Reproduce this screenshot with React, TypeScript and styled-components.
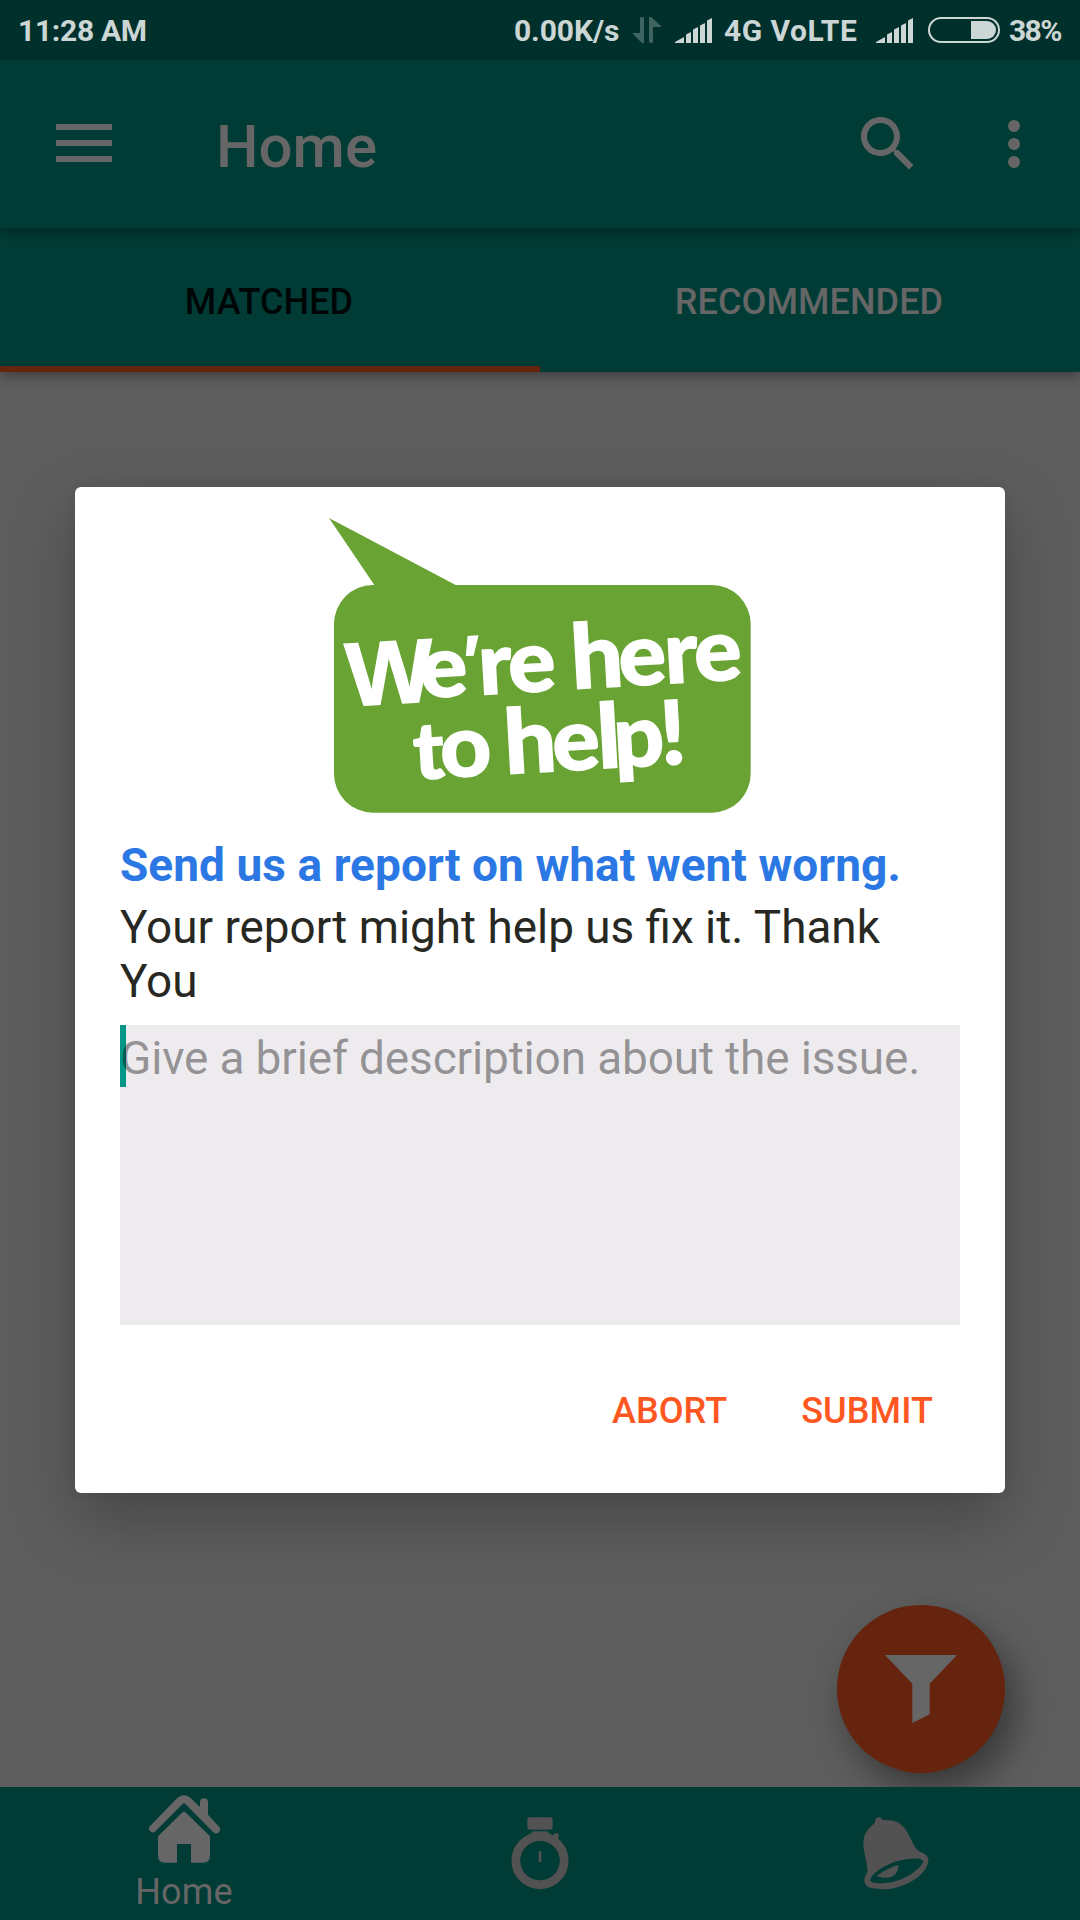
import React from 'react';
import styled, { createGlobalStyle } from 'styled-components';

const GlobalStyle = createGlobalStyle`
  * { box-sizing: border-box; }
  body { margin: 0; background: #5e5e5e; }
  svg { display: block; flex: none; }
`;

const Screen = styled.div`
  width: 1080px;
  height: 1920px;
  display: flex;
  flex-direction: column;
  position: relative;
  overflow: hidden;
  background: #5e5e5e;
  font-family: Roboto, 'Liberation Sans', sans-serif;
`;

const StatusBar = styled.header`
  height: 60px;
  flex: none;
  display: flex;
  align-items: center;
  padding: 0 19px 0 18px;
  background: #00302b;
  color: #ccd6d5;
  font-size: 30px;
  font-weight: 700;
  white-space: nowrap;
`;

const StatusText = styled.span<{ $w: number; $ml?: number; $ls?: number }>`
  width: ${(p) => p.$w}px;
  margin-left: ${(p) => p.$ml ?? 0}px;
  letter-spacing: ${(p) => p.$ls ?? 0}px;
  line-height: 60px;
  flex: none;
  padding-top: 2px;
`;

const Spacer = styled.div`
  flex: 1;
`;

const StatusIcons = styled.div<{ $ml: number }>`
  margin-left: ${(p) => p.$ml}px;
`;

const AppBar = styled.div`
  height: 168px;
  flex: none;
  display: flex;
  align-items: center;
  padding: 0 30px 0 56px;
  background: #003c35;
  box-shadow: 0 4px 12px rgba(0, 0, 0, 0.35);
  z-index: 2;
`;

const MenuIcon = styled.svg`
  margin-bottom: 2px;
`;

const Title = styled.h1`
  margin: 4px 0 0 104px;
  flex: 1;
  font-size: 60px;
  font-weight: 500;
  color: #666;
`;

const BarIcons = styled.div`
  display: flex;
  gap: 54px;
`;

const Tabs = styled.nav`
  height: 144px;
  flex: none;
  display: flex;
  background: #003c35;
  box-shadow: 0 4px 12px rgba(0, 0, 0, 0.35);
  z-index: 1;
`;

const Tab = styled.div<{ $active?: boolean }>`
  flex: 1;
  display: flex;
  align-items: center;
  justify-content: center;
  padding: 10px 2px 0 0;
  font-size: 36px;
  font-weight: 500;
  letter-spacing: 0.08px;
  color: ${(p) => (p.$active ? '#000606' : '#666')};
  border-bottom: 6px solid ${(p) => (p.$active ? '#66230e' : 'transparent')};
`;

const Content = styled.main`
  flex: 1;
  display: flex;
  align-items: flex-end;
  justify-content: flex-end;
  padding: 0 75px 14px 0;
  overflow: hidden;
`;

const Fab = styled.div`
  width: 168px;
  height: 168px;
  border-radius: 50%;
  display: flex;
  justify-content: center;
  padding-top: 50px;
  background: #66230e;
  box-shadow: 10px 16px 36px rgba(0, 0, 0, 0.42);
`;

const BottomNav = styled.nav`
  height: 133px;
  flex: none;
  display: flex;
  padding: 0 6px;
  background: #003c35;
`;

const NavItem = styled.div<{ $top: number }>`
  flex: 1;
  display: flex;
  flex-direction: column;
  align-items: center;
  padding-top: ${(p) => p.$top}px;
  color: #525252;
`;

const NavLabel = styled.span`
  margin-top: 8px;
  font-size: 36px;
  line-height: 42px;
  letter-spacing: 0.2px;
  color: #666;
`;

const Overlay = styled.div`
  position: absolute;
  inset: 0;
  z-index: 3;
  display: flex;
  flex-direction: column;
  align-items: center;
  padding-top: 487px;
`;

const Dialog = styled.section`
  width: 930px;
  height: 1006px;
  padding: 31px 45px 0;
  border-radius: 6px;
  background: #fff;
  box-shadow: 0 26px 66px rgba(0, 0, 0, 0.26), 0 0 14px rgba(0, 0, 0, 0.06);
  display: flex;
  flex-direction: column;
`;

const Logo = styled.svg`
  align-self: center;
`;

const Heading = styled.h2`
  margin: 25px 0 0;
  font-size: 46px;
  line-height: 54px;
  font-weight: 700;
  letter-spacing: 0.05px;
  color: #2b78e4;
  white-space: nowrap;
`;

const Message = styled.p`
  margin: 8px 0 0;
  font-size: 45.85px;
  line-height: 54px;
  color: #272822;
`;

const Field = styled.div`
  margin-top: 17px;
  height: 300px;
  flex: none;
  display: flex;
  align-items: flex-start;
  background: #edebee;
`;

const Cursor = styled.div`
  width: 6px;
  height: 62px;
  margin-right: -6px;
  background: #009688;
`;

const Placeholder = styled.span`
  padding-top: 4px;
  font-size: 46px;
  line-height: 58px;
  letter-spacing: -0.16px;
  color: rgba(0, 0, 0, 0.39);
  white-space: nowrap;
`;

const Actions = styled.div`
  display: flex;
  justify-content: flex-end;
  gap: 74px;
  margin-top: 65px;
  padding-right: 27px;
`;

const Action = styled.button`
  border: 0;
  padding: 0;
  background: none;
  font: 500 36px/42px Roboto, 'Liberation Sans', sans-serif;
  letter-spacing: 0.1px;
  color: #ff5722;
`;

const Signal = () => (
  <svg width="37" height="25" viewBox="0 0 37 25" fill="#ccd6d5">
    <path d="M0 25V24L9 19V25Z M11 25V16.500L16 14V25Z M18 25V11.500L23 9V25Z M25 25V7.500L30 5V25Z M32 25V2.500L37 0V25Z" />
  </svg>
);

type Glyph = { c: string; x: number; y?: number; size?: number; font?: string; weight?: number };

const logoWords: { x: number; y: number; glyphs: Glyph[] }[] = [
  {
    x: 112,
    y: 607,
    glyphs: [
      { c: 'W', x: 0, y: 4.5, size: 105, font: 'Liberation Sans', weight: 700 },
      { c: 'e', x: 83.5 },
      { c: '’', x: 131.5, y: -16, size: 72, font: 'Inter', weight: 700 },
      { c: 'r', x: 149.5 },
      { c: 'e', x: 183.2 },
    ],
  },
  {
    x: 802,
    y: 566,
    glyphs: [{ c: 'h', x: -5.5, size: 104 }, { c: 'e', x: 48.2 }, { c: 'r', x: 99.8 }, { c: 'e', x: 133.5 }],
  },
  { x: 317, y: 838, glyphs: [{ c: 't', x: -1, size: 92 }, { c: 'o', x: 29.2 }] },
  {
    x: 602,
    y: 821,
    glyphs: [
      { c: 'h', x: -5.5, size: 104 },
      { c: 'e', x: 48.8 },
      { c: 'l', x: 99.4, size: 104 },
      { c: 'p', x: 117.8 },
      { c: '!', x: 170.4, size: 103 },
    ],
  },
];

const HelpLogo = () => (
  <Logo width="422" height="295" viewBox="57 54 1266 885">
    <path fill="#69a334" d="M57 54L437 255H1206A117 117 0 0 1 1322 372V821A117 117 0 0 1 1206 938H188A117 117 0 0 1 72 821V372A117 117 0 0 1 188 255H193Z" />
    <g fill="#fff" stroke="#fff" strokeWidth="1.6" fontFamily="Lato, 'Liberation Sans', sans-serif" fontWeight="900" fontSize="100">
      {logoWords.map((w) => (
        <text key={w.x} transform={`translate(${w.x} ${w.y}) rotate(-3.3) scale(2.66 2.58)`}>
          {w.glyphs.map((g) => (
            <tspan key={g.x} x={g.x} y={g.y ?? 0} fontSize={g.size} fontFamily={g.font} fontWeight={g.weight}>
              {g.c}
            </tspan>
          ))}
        </text>
      ))}
    </g>
  </Logo>
);

export default function App() {
  return (
    <Screen>
      <GlobalStyle />
      <StatusBar>
        <StatusText $w={130} $ls={-0.3}>11:28 AM</StatusText>
        <Spacer />
        <StatusText $w={108} $ls={-0.1}>0.00K/s</StatusText>
        <StatusIcons $ml={11}>
          <svg width="28" height="26" viewBox="0 0 28 26" fill="#406460">
            <path d="M7 1Q7 0 9 0T11 1V26H9L0 17V16H7Z M16 0H18L28 9V10H20V25Q20 26 18 26T16 25Z" />
          </svg>
        </StatusIcons>
        <StatusIcons $ml={14}><Signal /></StatusIcons>
        <StatusText $w={138} $ml={12} $ls={0.5}>4G VoLTE</StatusText>
        <StatusIcons $ml={14}><Signal /></StatusIcons>
        <StatusIcons $ml={15}>
          <svg width="72" height="26" viewBox="0 0 72 26">
            <rect x="1" y="1" width="70" height="24" rx="12" fill="none" stroke="#ccd6d5" strokeWidth="2" />
            <path d="M43 4H59A9 9 0 0 1 59 22H43Z" fill="#ccd6d5" />
          </svg>
        </StatusIcons>
        <StatusText $w={52} $ml={9} $ls={-1.6}>38%</StatusText>
      </StatusBar>
      <AppBar>
        <MenuIcon width="56" height="38" viewBox="0 0 56 38" fill="#666">
          <path d="M0 0H56V6H0Z M0 16H56V22H0Z M0 32H56V38H0Z" />
        </MenuIcon>
        <Title>Home</Title>
        <BarIcons>
          <svg width="72" height="72" viewBox="0 0 24 24" fill="#666">
            <path d="M15.500 14h-.79l-.28-.27C15.410 12.590 16 11.110 16 9.500 16 5.910 13.090 3 9.500 3S3 5.910 3 9.500 5.910 16 9.500 16c1.610 0 3.090-.59 4.230-1.570l.27.28v.79l5 4.990L20.490 19l-4.990-5zm-6 0C7.010 14 5 11.990 5 9.500S7.010 5 9.500 5 14 7.010 14 9.500 11.990 14 9.500 14z" />
          </svg>
          <svg width="72" height="72" viewBox="0 0 24 24" fill="#666">
            <circle cx="12" cy="6" r="2" />
            <circle cx="12" cy="12" r="2" />
            <circle cx="12" cy="18" r="2" />
          </svg>
        </BarIcons>
      </AppBar>
      <Tabs>
        <Tab $active>MATCHED</Tab>
        <Tab>RECOMMENDED</Tab>
      </Tabs>
      <Content>
        <Fab>
          <svg width="72" height="68" viewBox="0 0 216 204" fill="#666">
            <path d="M0 0H216L134 86V178L82 204V86Z" />
          </svg>
        </Fab>
      </Content>
      <BottomNav>
        <NavItem $top={8}>
          <svg width="72" height="68" viewBox="144 75 216 204" fill="#666">
            <path d="M148 170L226 90Q252 62 278 90L300 111V97A12 12 0 0 1 324 97V134L356 169A12 12 0 0 1 340 187L257 103Q252 98 247 103L164 186A12 12 0 0 1 148 170Z" />
            <path d="M174 199L246 128Q252 122 258 128L330 199V257Q330 278 309 278H273V222H231V278H195Q174 278 174 257Z" />
          </svg>
          <NavLabel>Home</NavLabel>
        </NavItem>
        <NavItem $top={30}>
          <svg width="58" height="73" viewBox="93 140 174 219" fill="#525252">
            <rect x="142" y="141" width="76" height="37" rx="8" />
            <path d="M153 190Q155 183 161 183H200Q206 183 208 192L219 198 222 192A8 8 0 0 1 237 196L234 208 225 214 150 208Z" />
            <circle cx="180" cy="271" r="72" fill="none" stroke="#525252" strokeWidth="27" />
            <circle cx="180" cy="271" r="59" fill="#003c35" />
            <rect x="176" y="242" width="8" height="34" rx="4" />
          </svg>
        </NavItem>
        <NavItem $top={30}>
          <svg width="66" height="73" viewBox="69 140 198 219" fill="#525252">
            <path fillRule="evenodd" d="M104 158C105 150 108 141 116 141C122 141 124 145 129 149C150 150 164 149 180 160C205 178 213 213 229 236C238 247 255 246 263 260C269 275 262 292 245 310C220 335 180 352 145 356C115 358 84 356 76 342C69 328 76 316 82 305C84 285 72 255 70 220C70 195 78 180 104 158ZM91 330C92 312 130 286 170 273C205 262 248 261 249 272C249 288 212 316 180 328C150 340 92 344 91 330Z" />
            <path d="M110 316Q140 295 174 284C177 298 168 312 155 319C140 325 122 323 110 316Z" />
          </svg>
        </NavItem>
      </BottomNav>
      <Overlay>
        <Dialog>
          <HelpLogo />
          <Heading>Send us a report on what went worng.</Heading>
          <Message>Your report might help us fix it. Thank You</Message>
          <Field>
            <Cursor />
            <Placeholder>Give a brief description about the issue.</Placeholder>
          </Field>
          <Actions>
            <Action>ABORT</Action>
            <Action>SUBMIT</Action>
          </Actions>
        </Dialog>
      </Overlay>
    </Screen>
  );
}
